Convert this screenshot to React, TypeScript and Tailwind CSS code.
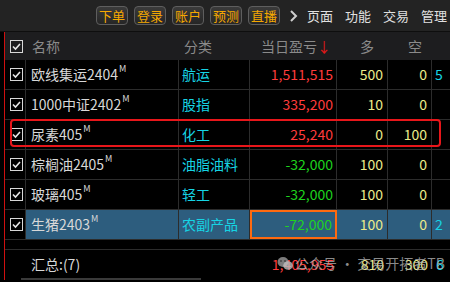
import React from "react";

const font = { fontFamily: '"Noto Sans CJK SC", "Noto Sans", sans-serif' };

interface Row {
  name: string;
  cat: string;
  pnl: string;
  up: boolean;
  long: string;
  short: string;
  extra: string;
}

const rows: Row[] = [
  { name: "欧线集运2404", cat: "航运", pnl: "1,511,515", up: true, long: "500", short: "0", extra: "5" },
  { name: "1000中证2402", cat: "股指", pnl: "335,200", up: true, long: "10", short: "0", extra: "" },
  { name: "尿素405", cat: "化工", pnl: "25,240", up: true, long: "0", short: "100", extra: "" },
  { name: "棕榈油2405", cat: "油脂油料", pnl: "-32,000", up: false, long: "100", short: "0", extra: "" },
  { name: "玻璃405", cat: "轻工", pnl: "-32,000", up: false, long: "100", short: "0", extra: "" },
  { name: "生猪2403", cat: "农副产品", pnl: "-72,000", up: false, long: "100", short: "0", extra: "2" },
];

function Check() {
  return (
    <div className="w-[13px] h-[13px] border border-[#d8d8d8] flex items-center justify-center shrink-0">
      <svg width="11" height="11" viewBox="0 0 11 11">
        <path d="M2 5.5 L4.5 8 L9 3" stroke="#e8e8e8" strokeWidth="1.6" fill="none" />
      </svg>
    </div>
  );
}

function NavBtn({ text }: { text: string }) {
  return (
    <div className="h-[19px] w-[32px] shrink-0 justify-center whitespace-nowrap rounded-[4px] border border-[#5e5e5e] bg-gradient-to-b from-[#3a3a3a] to-[#262626] text-[#f5a800] text-[13px] leading-[17px] flex items-center">
      {text}
    </div>
  );
}

export default function App() {
  return (
    <div className="w-[450px] h-[282px] overflow-hidden bg-black relative whitespace-nowrap" style={font}>
      {/* top bar */}
      <div className="h-[32px] bg-[#232323] border-b border-[#0e0e0e] flex items-center pl-[96px] gap-[6px]">
        <NavBtn text="下单" />
        <NavBtn text="登录" />
        <NavBtn text="账户" />
        <NavBtn text="预测" />
        <NavBtn text="直播" />
        <svg width="10" height="14" viewBox="0 0 10 14" className="ml-[3px] shrink-0">
          <path d="M2 2 L7 7 L2 12" stroke="#cfcfcf" strokeWidth="2" fill="none" />
        </svg>
        <div className="flex gap-[12px] text-[#e0e0e0] text-[13px] shrink-0 ml-[2px]">
          <span>页面</span>
          <span>功能</span>
          <span>交易</span>
          <span>管理</span>
        </div>
      </div>

      <div className="ml-[4px] border-l border-[#d01010]">
        {/* header */}
        <div className="h-[28px] bg-[#1d1d1f] flex items-center text-[14px] text-[#8a8a8a]">
          <div className="w-[21px] flex justify-center pl-[2px] shrink-0">
            <Check />
          </div>
          <div className="w-[153px] pl-[6px] shrink-0">名称</div>
          <div className="w-[71px] pl-[5px] shrink-0">分类</div>
          <div className="w-[87px] text-right pr-[6px] shrink-0">
            当日盈亏<span className="text-[#e01818]">↓</span>
          </div>
          <div className="w-[51px] text-right pr-[14px] shrink-0">多</div>
          <div className="w-[44px] text-right pr-[10px] shrink-0">空</div>
        </div>

        {rows.map((r, i) => {
          const sel = i === 5;
          return (
            <div
              key={r.name}
              className={`h-[30px] flex text-[14px] border-b border-[#2c2c2c] ${sel ? "bg-[#2d5d7e]" : "bg-black"}`}
            >
              <div className="w-[21px] shrink-0 flex items-center justify-center pl-[2px] bg-black border-r border-[#2c2c2c]">
                <Check />
              </div>
              <div className="w-[153px] shrink-0 pl-[5px] flex items-center text-[#d8d8d8] border-r border-[#2c2c2c]">
                {r.name}
                <sup className="text-[9px] -mt-[3px] ml-[1px]">M</sup>
              </div>
              <div className="w-[71px] shrink-0 pl-[3px] flex items-center text-[#16d4e4] overflow-hidden border-r border-[#2c2c2c]">
                {r.cat}
              </div>
              <div
                className={`w-[87px] shrink-0 flex items-center justify-end pr-[3px] ${r.up ? "text-[#ff3b3b]" : "text-[#1ed21e]"} ${sel ? "border-2 border-[#ff6a10]" : "border-r border-[#2c2c2c]"}`}
              >
                {r.pnl}
              </div>
              <div className="w-[51px] shrink-0 flex items-center justify-end pr-[4px] text-[#ecec8a] border-r border-[#2c2c2c]">
                {r.long}
              </div>
              <div className="w-[44px] shrink-0 flex items-center justify-end pr-[4px] text-[#ecec8a] border-r border-[#2c2c2c]">
                {r.short}
              </div>
              <div className="flex-1 flex items-center pl-[3px] text-[#16d4e4]">{r.extra}</div>
            </div>
          );
        })}

        <div className="h-[10px] border-b border-[#2c2c2c]" />

        {/* summary */}
        <div className="h-[28px] flex items-center text-[14px]">
          <div className="w-[21px] shrink-0" />
          <div className="w-[153px] shrink-0 pl-[5px] text-[#d8d8d8]">汇总:(7)</div>
          <div className="w-[71px] shrink-0" />
          <div className="w-[87px] shrink-0 text-right pr-[3px] text-[#ff3b3b]">1,405,955</div>
          <div className="w-[51px] shrink-0 text-right pr-[4px] text-[#ecec8a]">810</div>
          <div className="w-[44px] shrink-0 text-right pr-[4px] text-[#ecec8a]">300</div>
          <div className="flex-1 pl-[4px] text-[#16d4e4]">6</div>
        </div>
        <div className="h-[2px] ml-[16px] w-[180px] bg-[#3a3a3a]" />
      </div>

      {/* red annotation box */}
      <div className="absolute left-[10px] top-[119px] w-[431px] h-[28px] border-[2.5px] border-[#e8161a] rounded-[4px]" />

      {/* watermark */}
      <div className="absolute left-[277px] top-[253px] flex items-center gap-[2px] text-[14px] text-[#b8b8b8]/75">
        <svg width="16" height="15" viewBox="0 0 16 15">
          <ellipse cx="6" cy="6" rx="5.5" ry="5" fill="#9a9a9a" fillOpacity="0.8" />
          <ellipse cx="11" cy="9.5" rx="4.8" ry="4.3" fill="#bdbdbd" fillOpacity="0.8" />
          <circle cx="4" cy="5" r="0.8" fill="#222" />
          <circle cx="8" cy="5" r="0.8" fill="#222" />
        </svg>
        <span>公众号 · 交易开拓者TB</span>
      </div>
    </div>
  );
}
